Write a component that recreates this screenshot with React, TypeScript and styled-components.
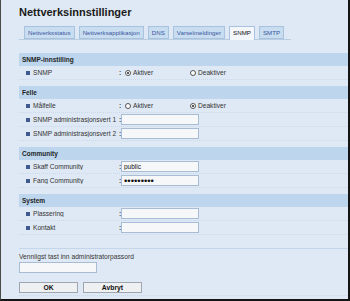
import React from 'react';
import styled, { createGlobalStyle } from 'styled-components';

const GlobalStyle = createGlobalStyle`
  html, body {
    margin: 0;
    padding: 0;
    background: #dfe9f5;
  }
  * {
    box-sizing: border-box;
  }
`;

type Field =
  | { label: string; kind: 'radio'; value: 'on' | 'off' }
  | { label: string; kind: 'text'; value?: string }
  | { label: string; kind: 'password'; value: string };

const sections: { title: string; fields: Field[] }[] = [
  { title: 'SNMP-innstilling', fields: [{ label: 'SNMP', kind: 'radio', value: 'on' }] },
  {
    title: 'Felle',
    fields: [
      { label: 'Målfelle', kind: 'radio', value: 'off' },
      { label: 'SNMP administrasjonsvert 1', kind: 'text' },
      { label: 'SNMP administrasjonsvert 2', kind: 'text' },
    ],
  },
  {
    title: 'Community',
    fields: [
      { label: 'Skaff Community', kind: 'text', value: 'public' },
      { label: 'Fang Community', kind: 'password', value: '123456789' },
    ],
  },
  {
    title: 'System',
    fields: [
      { label: 'Plassering', kind: 'text' },
      { label: 'Kontakt', kind: 'text' },
    ],
  },
];

const tabs = ['Nettverksstatus', 'Nettverksapplikasjon', 'DNS', 'Varselmeldinger', 'SNMP', 'SMTP'];

const App = () => {
  return (
    <Frame>
      <GlobalStyle />
      <Title>Nettverksinnstillinger</Title>
      <TabBar>
        {tabs.map((t) => (
          <Tab key={t} active={t === 'SNMP'}>
            {t}
          </Tab>
        ))}
      </TabBar>

      <Sections>
        {sections.map((s) => (
          <Section key={s.title}>
            <SectionHeader>{s.title}</SectionHeader>
            {s.fields.map((f) => (
              <Row key={f.label}>
                <Label>
                  <Bullet />
                  {f.label}
                </Label>
                <Colon>:</Colon>
                {f.kind === 'radio' ? (
                  <RadioGroup>
                    <RadioOption>
                      <Radio checked={f.value === 'on'} />
                      Aktiver
                    </RadioOption>
                    <RadioOption>
                      <Radio checked={f.value === 'off'} />
                      Deaktiver
                    </RadioOption>
                  </RadioGroup>
                ) : (
                  <Input
                    type={f.kind === 'password' ? 'password' : 'text'}
                    masked={f.kind === 'password'}
                    defaultValue={f.value ?? ''}
                    readOnly
                  />
                )}
              </Row>
            ))}
          </Section>
        ))}
      </Sections>

      <Footer>
        <Prompt>Vennligst tast inn administratorpassord</Prompt>
        <PasswordInput type="password" readOnly />
        <Buttons>
          <Button>OK</Button>
          <Button>Avbryt</Button>
        </Buttons>
      </Footer>
    </Frame>
  );
};

const Frame = styled.div`
  width: 350px;
  height: 301px;
  background: #dfe9f5;
  border-left: 1px solid #4a4a4a;
  border-right: 2px solid #141414;
  border-bottom: 2px solid #141414;
  padding: 6px 0 0 18px;
  font-family: 'Liberation Sans', Arial, sans-serif;
  color: #333;
  overflow: hidden;
`;

const Title = styled.div`
  font-size: 11px;
  font-weight: 700;
  color: #1a1a1a;
  height: 12px;
  line-height: 12px;
`;

const TabBar = styled.div`
  display: flex;
  align-items: flex-end;
  gap: 4px;
  width: 272px;
  height: 14px;
  margin-top: 8px;
  padding-left: 5px;
  border-bottom: 1px solid #b8cce2;
`;

const Tab = styled.div<{ active?: boolean }>`
  height: ${(p) => (p.active ? 14 : 13)}px;
  margin-bottom: ${(p) => (p.active ? -1 : 0)}px;
  padding: 0 3px;
  font-size: 6.2px;
  line-height: 12px;
  color: ${(p) => (p.active ? '#111' : '#3856a0')};
  background: ${(p) => (p.active ? '#f3f7fb' : '#c9ddf1')};
  border: 1px solid #a9c3df;
  border-bottom: ${(p) => (p.active ? 'none' : '1px solid #a9c3df')};
`;

const Sections = styled.div`
  display: flex;
  flex-direction: column;
  gap: 6px;
  margin-top: 13px;
`;

const Section = styled.div`
  display: flex;
  flex-direction: column;
`;

const SectionHeader = styled.div`
  height: 13px;
  line-height: 13px;
  padding-left: 3px;
  background: #bdd6ee;
  font-size: 6.5px;
  font-weight: 700;
  color: #1e1e1e;
`;

const Row = styled.div`
  display: flex;
  align-items: center;
  height: 14px;
  border-bottom: 1px dotted #cbdaea;
  font-size: 6.6px;
`;

const Label = styled.div`
  display: flex;
  align-items: center;
  gap: 3px;
  width: 100px;
  padding-left: 7px;
  white-space: nowrap;
  overflow: hidden;
`;

const Bullet = styled.span`
  flex: none;
  width: 4px;
  height: 4px;
  background: #3f5a8e;
`;

const Colon = styled.span`
  width: 2px;
  font-weight: 700;
  color: #444;
`;

const RadioGroup = styled.div`
  display: flex;
  align-items: center;
  padding-left: 4px;
`;

const RadioOption = styled.label`
  display: flex;
  align-items: center;
  gap: 2px;
  width: 65px;
`;

const Radio = styled.span<{ checked?: boolean }>`
  position: relative;
  width: 6px;
  height: 6px;
  border: 1px solid #555;
  border-radius: 50%;
  background: #fff;
  &::after {
    content: '';
    display: ${(p) => (p.checked ? 'block' : 'none')};
    position: absolute;
    left: 1px;
    top: 1px;
    width: 2px;
    height: 2px;
    border-radius: 50%;
    background: #222;
  }
`;

const Input = styled.input<{ masked?: boolean }>`
  width: 78px;
  height: 11px;
  padding: 0 2px;
  border: 1px solid #a8bcd3;
  background: #f5f7f9;
  font-family: 'Liberation Sans', Arial, sans-serif;
  font-size: ${(p) => (p.masked ? 9.5 : 6.5)}px;
  line-height: 9px;
  color: #111;
  outline: none;
`;

const Footer = styled.div`
  margin-top: 13px;
  border-top: 1px solid #c4d6ea;
  padding-top: 4px;
  height: 48px;
  border-bottom: 1px dotted #cbdaea;
`;

const Prompt = styled.div`
  font-size: 6.7px;
  line-height: 8px;
  color: #333;
`;

const PasswordInput = styled(Input)`
  display: block;
  margin-top: 1px;
`;

const Buttons = styled.div`
  display: flex;
  gap: 5px;
  margin-top: 9px;
`;

const Button = styled.button`
  width: 59px;
  height: 11px;
  padding: 0;
  border: 1px solid #9ea7b1;
  background: #eef0f2;
  font-family: 'Liberation Sans', Arial, sans-serif;
  font-size: 6.8px;
  font-weight: 700;
  color: #111;
  line-height: 9px;
`;

export default App;
